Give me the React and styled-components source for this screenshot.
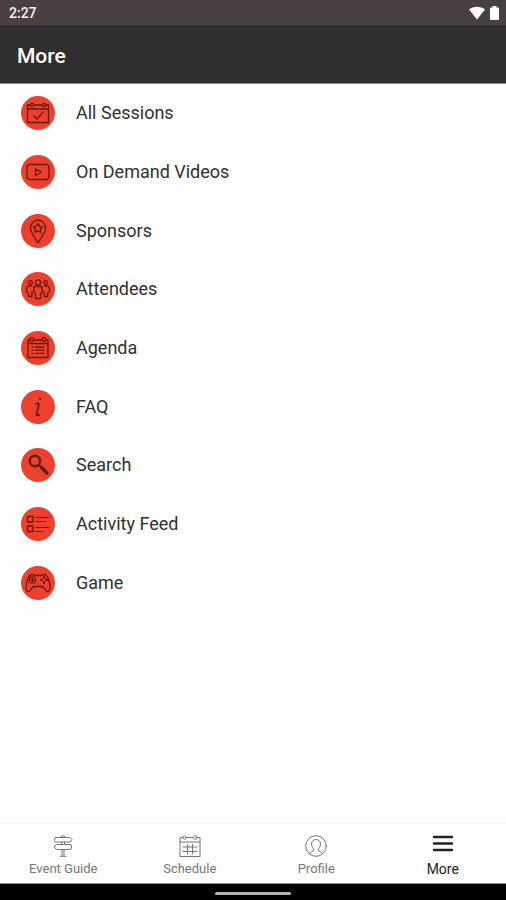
import React from "react";
import styled, { createGlobalStyle } from "styled-components";

const GlobalStyle = createGlobalStyle`
  * { box-sizing: border-box; }
  body {
    margin: 0;
    background: #fefefe;
    font-family: Roboto, "Liberation Sans", sans-serif;
  }
`;

const Screen = styled.div`
  display: flex;
  flex-direction: column;
  min-height: 100vh;
  background: #fefefe;
`;

const StatusBar = styled.div`
  display: flex;
  align-items: center;
  justify-content: space-between;
  height: 25px;
  padding: 0 7px 0 9px;
  background: #4a3f41;
  color: #f5f2f2;
  font-size: 14px;
  font-weight: 500;
`;

const StatusIcons = styled.div`
  display: flex;
  align-items: center;
  gap: 5px;
`;

const Header = styled.header`
  display: flex;
  align-items: center;
  height: 59px;
  padding: 4px 17px 0;
  background: #2f2f2f;
  border-bottom: 1px solid #8c8c8c;
`;

const Title = styled.h1`
  margin: 0;
  color: #ffffff;
  font-size: 21px;
  line-height: 24px;
  font-weight: 500;
`;

const Main = styled.main`
  flex: 1;
`;

const Menu = styled.ul`
  display: grid;
  grid-auto-rows: 1fr;
  min-height: 528px;
  margin: 0;
  padding: 0;
  list-style: none;
`;

const MenuItem = styled.li`
  display: flex;
`;

const MenuLink = styled.a`
  display: flex;
  flex: 1;
  align-items: center;
  gap: 21px;
  padding: 0 21px;
  color: #303030;
  font-size: 18px;
  line-height: 20px;
  text-decoration: none;
`;

const Badge = styled.span`
  display: flex;
  width: 34px;
  height: 34px;
  border-radius: 50%;
  background: #ee412d;
  color: #66190f;
`;

const Glyph = styled.svg`
  display: block;
  fill: none;
  stroke: currentColor;
  stroke-width: ${(p) => p.$weight || 1.3};
  stroke-linejoin: round;
  stroke-linecap: round;
`;

const TabBar = styled.nav`
  display: grid;
  grid-template-columns: repeat(4, 1fr);
  height: 61px;
  background: #fefefe;
  border-top: 1px solid #f2f2f2;
  border-bottom: 1px solid #8c8c8c;
`;

const Tab = styled.a`
  display: flex;
  flex-direction: column;
  align-items: center;
  gap: 1px;
  padding-top: 10px;
  color: ${(p) => (p.$active ? "#222222" : "#777777")};
  font-size: ${(p) => (p.$active ? 14 : 13)}px;
  line-height: 20px;
  text-decoration: none;
`;

const SystemBar = styled.div`
  display: flex;
  align-items: center;
  justify-content: center;
  height: 16px;
  padding-top: 3px;
  background: #000000;
`;

const HomeHandle = styled.div`
  width: 76px;
  height: 3px;
  border-radius: 2px;
  background: #b5b5b5;
`;

const icons = {
  sessions: (
    <>
      <path d="M9 9H6.500v17.500h21V9H25M13 9h8M6.500 13h21" />
      <circle cx="11" cy="9" r="1.700" />
      <circle cx="23" cy="9" r="1.700" />
      <path d="M12.500 19.500l3.500 3.500 6-7" />
    </>
  ),
  video: (
    <>
      <rect x="6" y="9.500" width="22" height="15" rx="3" />
      <path d="M14.500 14v6.500l6-3.250z" />
    </>
  ),
  sponsors: (
    <>
      <path d="M17 29c-1.500-4-7.500-9-7.500-15a7.500 8 0 0 1 15 0c0 6-6 11-7.500 15z" />
      <path d="M17 9.200l1.500 3.100 3.300.5-2.400 2.400.6 3.300-3-1.600-3 1.600.6-3.300-2.400-2.400 3.300-.5z" />
    </>
  ),
  attendees: (
    <>
      <circle cx="17" cy="10.500" r="2.600" />
      <path d="M13 14.500h8v6l-1.500 1v5h-5v-5l-1.500-1z" />
      <circle cx="9.500" cy="10.500" r="1.800" />
      <circle cx="24.500" cy="10.500" r="1.800" />
      <path d="M10.500 14H7l-1.500 2.500v3.500l2 1v3.500H11v-5M23.500 14H27l1.500 2.500v3.500l-2 1v3.500H23v-5" />
    </>
  ),
  agenda: (
    <>
      <path d="M9 9H7v17.500h20V9h-2M13 9h8M7 12.500h20" />
      <circle cx="11" cy="8.500" r="1.800" />
      <circle cx="23" cy="8.500" r="1.800" />
      <path d="M11 16h1M14.500 16H23M11 19.200h1M14.500 19.200H23M11 22.400h1M14.500 22.400H23" />
    </>
  ),
  faq: (
    <>
      <path d="M19 8.800l.1-.3" strokeWidth="2.200" />
      <path d="M15 13.800c1.500-.8 3-.8 2.900.4l-2.300 10.300c-.1 1.400 1.200 1.200 2.600.2" strokeWidth="1.700" />
    </>
  ),
  search: (
    <>
      <circle cx="14" cy="13" r="5.200" strokeWidth="2.400" />
      <path d="M18 17l2 2" strokeWidth="2" />
      <path d="M20.500 19.500l5.500 5.500" strokeWidth="3.200" />
    </>
  ),
  feed: (
    <>
      <rect x="6.500" y="9.500" width="5.500" height="5.500" />
      <rect x="6.500" y="19" width="5.500" height="5.500" />
      <path d="M15 10.500h13M15 14.500h9.500M15 20.500h13M15 24.500h7" strokeWidth="1.100" />
    </>
  ),
  game: (
    <>
      <path d="M11 8.500c2-.3 2.500 1 3.500 1h5c1 0 1.500-1.300 3.500-1 4 .5 5.500 7 6 12 .3 4-1.500 6-3.500 4.500-2-1.500-2.500-4-4.500-4.500h-8c-2 .5-2.500 3-4.500 4.500-2 1.500-3.800-.5-3.500-4.500.5-5 2-11.500 6-12z" />
      <circle cx="11.500" cy="14" r="3.200" />
      <path d="M10 14h3M11.500 12.500v3" />
      <path d="M23 11v.5M23 16.500v.5M20 14h.5M25.500 14h.5" strokeWidth="2" />
      <path d="M20.500 14L23 11.500l2.500 2.500-2.500 2.500z" strokeWidth="0.800" />
    </>
  ),
  guide: (
    <>
      <path d="M4 3.500h14l2 2-2 2.500H4a1.500 1.500 0 0 1-1.500-1.500V5A1.500 1.500 0 0 1 4 3.500z" />
      <path d="M18 10.500H4.500L2 13l2.500 2.500H18a1.500 1.500 0 0 0 1.500-1.500v-2a1.500 1.500 0 0 0-1.500-1.500z" />
      <path d="M9.500 3V2h3v1M9.500 8v2.500M12.500 8v2.500M10 15.500V22M12 15.500V22M8 22.300h6" />
    </>
  ),
  schedule: (
    <>
      <path d="M4 3.500H1v19h20v-19h-3M7.500 3.500h7M1 8h20" />
      <circle cx="5.500" cy="3.500" r="1.700" />
      <circle cx="16.500" cy="3.500" r="1.700" />
      <path d="M4 13h14M4 17.500h14M8.500 10.500V20M13.500 10.500V20" />
    </>
  ),
  profile: (
    <>
      <circle cx="11" cy="12" r="10.300" />
      <path d="M4.500 19.500c.5-2 4.500-2 4.500-3.500 0-1-2.500-3-2.500-6 0-6 9-6 9 0 0 3-2.500 5-2.500 6 0 1.500 4 1.500 4.500 3.500" />
    </>
  ),
  more: <path d="M2 3h18M2 9.500h18M2 16h18" strokeWidth="2.400" />,
};

const menuItems = [
  ["sessions", "All Sessions"],
  ["video", "On Demand Videos"],
  ["sponsors", "Sponsors"],
  ["attendees", "Attendees"],
  ["agenda", "Agenda"],
  ["faq", "FAQ"],
  ["search", "Search"],
  ["feed", "Activity Feed"],
  ["game", "Game"],
];

const tabs = [
  ["guide", "Event Guide"],
  ["schedule", "Schedule"],
  ["profile", "Profile"],
  ["more", "More"],
];

export default function App() {
  return (
    <Screen>
      <GlobalStyle />
      <StatusBar>
        <time>2:27</time>
        <StatusIcons>
          <svg width="16" height="14" viewBox="0 0 16 14" fill="#ffffff" aria-hidden="true">
            <path d="M0 3.500C4.500-.3 11.500-.3 16 3.500L8 13.500z" />
          </svg>
          <svg width="9" height="14" viewBox="0 0 9 14" fill="#ffffff" aria-hidden="true">
            <path d="M2.500 0h4v1.500H8a1 1 0 0 1 1 1V13a1 1 0 0 1-1 1H1a1 1 0 0 1-1-1V2.500a1 1 0 0 1 1-1h1.500z" />
          </svg>
        </StatusIcons>
      </StatusBar>
      <Header>
        <Title>More</Title>
      </Header>
      <Main>
        <Menu>
          {menuItems.map(([icon, label]) => (
            <MenuItem key={icon}>
              <MenuLink href={`#${icon}`}>
                <Badge>
                  <Glyph width="34" height="34" viewBox="0 0 34 34" aria-hidden="true">
                    {icons[icon]}
                  </Glyph>
                </Badge>
                {label}
              </MenuLink>
            </MenuItem>
          ))}
        </Menu>
      </Main>
      <TabBar>
        {tabs.map(([icon, label]) => (
          <Tab
            key={icon}
            href={`#${icon}`}
            $active={icon === "more"}
            aria-current={icon === "more" ? "page" : undefined}
          >
            <Glyph width="22" height="24" viewBox="0 0 22 24" $weight={1} aria-hidden="true">
              {icons[icon]}
            </Glyph>
            {label}
          </Tab>
        ))}
      </TabBar>
      <SystemBar>
        <HomeHandle />
      </SystemBar>
    </Screen>
  );
}
